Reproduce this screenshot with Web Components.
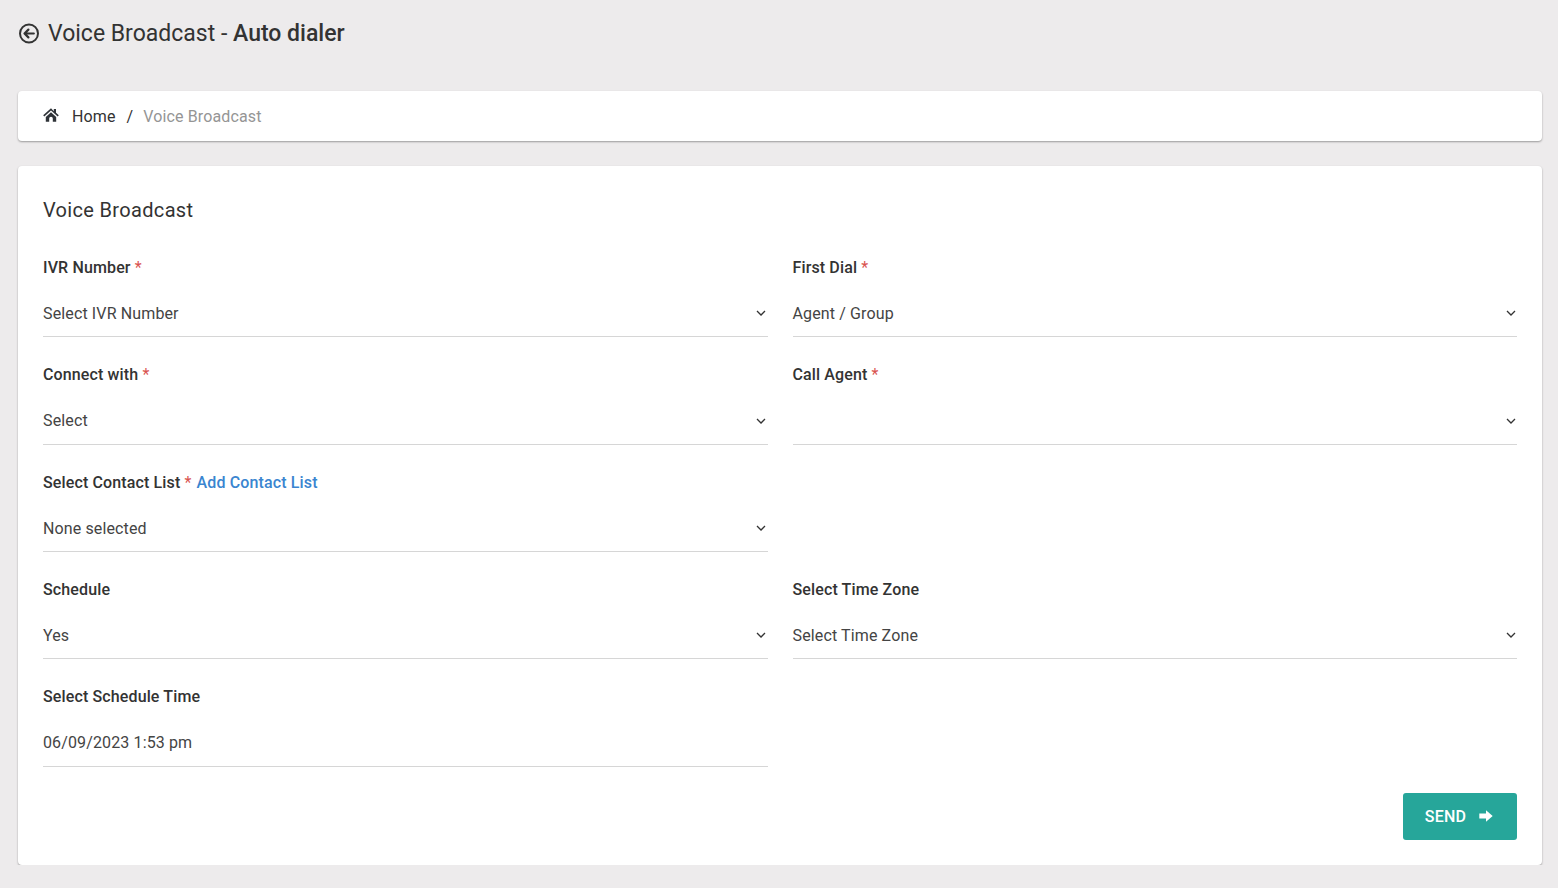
<!DOCTYPE html>
<html>
<head>
<meta charset="utf-8">
<title>Voice Broadcast - Auto dialer</title>
<style>
  html, body { margin: 0; padding: 0; }
  body {
    background: #edebec;
    color: #333;
    font-family: Roboto, "Liberation Sans", sans-serif;
  }
</style>
</head>
<body>
<auto-dialer-page></auto-dialer-page>

<script>
class PageTitle extends HTMLElement {
  constructor() {
    super();
    this.attachShadow({ mode: 'open' });
    this.shadowRoot.innerHTML = `
      <style>
        :host { display: flex; align-items: center; height: 66px; }
        svg { width: 21px; height: 21px; margin-right: 9px; flex: none; }
        h1 { margin: 2px 0 0; font-size: 23px; font-weight: 400; line-height: 28px; color: #333; }
      </style>
      <svg viewBox="0 0 21 21" fill="none" stroke="#333" stroke-width="2" stroke-linecap="round" stroke-linejoin="round">
        <circle cx="11" cy="10.5" r="9"/>
        <path d="M15.8 10.5H6.8M10.4 6.6l-3.9 3.9 3.9 3.9" stroke-width="2.2"/>
      </svg>
      <h1><slot></slot></h1>
    `;
  }
}

class BreadCrumb extends HTMLElement {
  constructor() {
    super();
    this.attachShadow({ mode: 'open' });
    this.shadowRoot.innerHTML = `
      <style>
        :host {
          display: flex; align-items: center; height: 50px; padding: 0 25px;
          background: #fff; border-radius: 4px; box-shadow: 0 1px 2px rgba(0,0,0,.35);
          font-size: 16px; letter-spacing: .13px; color: #333;
        }
        svg { width: 16px; height: 14px; margin: -2px 13px 0 0; flex: none; }
        .sep { margin: 0 10px 0 11px; }
        .current { color: #959595; }
      </style>
      <svg viewBox="0 0 16 14"><path fill="#2f3338" d="M8 0.2 0.2 7.2l1.1 1.2L8 2.5l6.7 5.9 1.1-1.2-2.8-2.5V1h-2.2v2.2zM2.8 9V13.8h3.4V10.6a1.8 1.8 0 0 1 3.6 0V13.8h3.4V9L8 4.3z"/></svg>
      <span>Home</span><span class="sep">/</span><span class="current">Voice Broadcast</span>
    `;
  }
}

class FormCard extends HTMLElement {
  constructor() {
    super();
    this.attachShadow({ mode: 'open' });
    this.shadowRoot.innerHTML = `
      <style>
        :host {
          display: block; margin-top: 25px; padding: 32px 25px 25px; height: 699px; box-sizing: border-box;
          background: #fff; border-radius: 4px; box-shadow: 0 1px 2px rgba(0,0,0,.35);
        }
        h2 { margin: 0 0 33px; font-size: 20px; font-weight: 400; line-height: 25px; letter-spacing: .33px; color: #333; }
        .grid { display: grid; grid-template-columns: 724.5px 724.5px; column-gap: 25px; grid-auto-rows: 107.3px; }
        .foot { display: flex; justify-content: flex-end; margin-top: .5px; }
      </style>
      <h2><slot name="title"></slot></h2>
      <div class="grid"><slot></slot></div>
      <div class="foot"><slot name="action"></slot></div>
    `;
  }
}

class FormField extends HTMLElement {
  constructor() {
    super();
    this.attachShadow({ mode: 'open' });
  }

  connectedCallback() {
    const required = this.hasAttribute('required');
    const chevron = this.hasAttribute('no-arrow') ? '' : `
      <svg viewBox="0 0 10 6" fill="none" stroke="#333" stroke-width="1.3"><path d="M1 1l4 4 4-4"/></svg>`;
    this.shadowRoot.innerHTML = `
      <style>
        :host { display: block; }
        label { display: block; height: 24px; line-height: 24px; font-size: 16px; font-weight: 500; letter-spacing: .13px; color: #333; }
        .req { color: #d9534f; font-weight: 400; }
        .control {
          display: flex; align-items: center; justify-content: space-between;
          margin-top: 11px; height: 45.4px; border-bottom: 1px solid #d6d6d6;
          font-size: 16px; letter-spacing: .13px; color: #444;
        }
        .control > span { margin-bottom: .5px; }
        svg { width: 10px; height: 6px; margin: 0 1.5px .8px 0; flex: none; }
        ::slotted(a) { color: #3a85d0; text-decoration: none; margin-left: 1px; }
      </style>
      <label>${this.getAttribute('label')}${required ? ' <span class="req">*</span>' : ''} <slot name="extra"></slot></label>
      <div class="control"><span><slot></slot></span>${chevron}</div>
    `;
  }
}

class SendButton extends HTMLElement {
  constructor() {
    super();
    this.attachShadow({ mode: 'open' });
    this.shadowRoot.innerHTML = `
      <style>
        :host {
          display: flex; align-items: center; justify-content: center; gap: 13px;
          width: 114px; height: 47px; background: #26a69a; border-radius: 3px;
          color: #fff; font-size: 16px; font-weight: 500; letter-spacing: .2px; cursor: pointer;
        }
        span { margin-left: -2px; }
        svg { width: 14px; height: 12px; flex: none; }
      </style>
      <span><slot></slot></span>
      <svg viewBox="0 0 14 12"><path fill="#fff" d="M0.3 3.4H7V0.2L13.7 6 7 11.8V8.6H0.3z"/></svg>
    `;
  }
}

class AutoDialerPage extends HTMLElement {
  constructor() {
    super();
    this.attachShadow({ mode: 'open' });
    this.shadowRoot.innerHTML = `
      <style>
        :host { display: block; padding: 0 16px 0 18px; }
        .spacer { height: 25px; }
      </style>
      <page-title>Voice Broadcast - <b style="font-weight:500">Auto dialer</b></page-title>
      <div class="spacer"></div>
      <bread-crumb></bread-crumb>
      <form-card>
        <span slot="title">Voice Broadcast</span>
        <form-field label="IVR Number" required>Select IVR Number</form-field>
        <form-field label="First Dial" required>Agent / Group</form-field>
        <form-field label="Connect with" required>Select</form-field>
        <form-field label="Call Agent" required></form-field>
        <form-field label="Select Contact List" required><a slot="extra" href="#">Add Contact List</a>None selected</form-field>
        <div></div>
        <form-field label="Schedule">Yes</form-field>
        <form-field label="Select Time Zone">Select Time Zone</form-field>
        <form-field label="Select Schedule Time" no-arrow>06/09/2023 1:53 pm</form-field>
        <div></div>
        <send-button slot="action">SEND</send-button>
      </form-card>
    `;
  }
}

customElements.define('page-title', PageTitle);
customElements.define('bread-crumb', BreadCrumb);
customElements.define('form-card', FormCard);
customElements.define('form-field', FormField);
customElements.define('send-button', SendButton);
customElements.define('auto-dialer-page', AutoDialerPage);
</script>
</body>
</html>
